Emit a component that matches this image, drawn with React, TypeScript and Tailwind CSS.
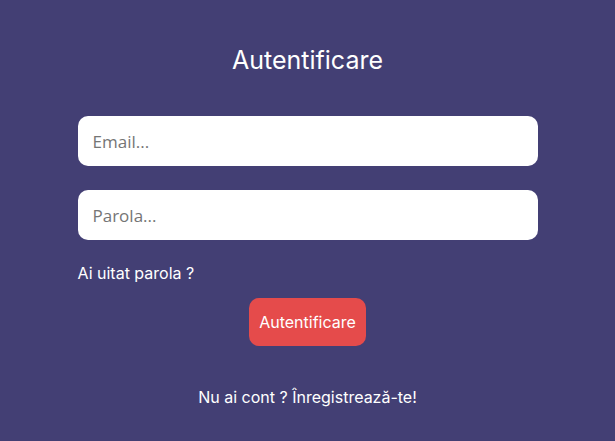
export default function App() {
  return (
    <div className="min-h-screen w-full bg-[#433f74] font-['Inter',sans-serif] text-white">
      <div className="mx-auto flex w-[460px] flex-col pt-[44px]">
        <h1 className="text-center text-[25px] leading-[32px]">Autentificare</h1>
        <input
          type="email"
          placeholder="Email..."
          className="mt-[40px] h-[50px] w-full rounded-[10px] bg-white px-[15px] font-['Open_Sans',sans-serif] text-[17px] text-gray-800 outline-none placeholder:text-[#757575]"
        />
        <input
          type="password"
          placeholder="Parola..."
          className="mt-[24px] h-[50px] w-full rounded-[10px] bg-white px-[15px] font-['Open_Sans',sans-serif] text-[17px] text-gray-800 outline-none placeholder:text-[#757575]"
        />
        <a className="mt-[22px] self-start text-[16px] leading-[22px]">Ai uitat parola ?</a>
        <button className="mt-[14px] h-[48px] self-center rounded-[10px] bg-[#e54b4b] px-[10px] text-[16px] text-white">
          Autentificare
        </button>
        <p className="mt-[40px] text-center text-[16px] leading-[22px]">Nu ai cont ? Înregistrează-te!</p>
      </div>
    </div>
  );
}
